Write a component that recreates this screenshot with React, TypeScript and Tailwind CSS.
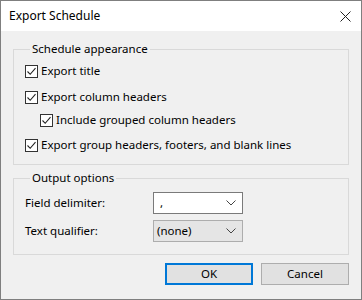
import React from 'react';

const font = { fontFamily: '"Noto Sans", "Liberation Sans", sans-serif' };

const CheckBox: React.FC<{ label: string; className?: string }> = ({ label, className }) => (
  <label className={`flex items-center h-4 ${className ?? ''}`}>
    <span className="w-[13px] h-[13px] border border-[#333] bg-white flex items-center justify-center">
      <svg width="11" height="11" viewBox="0 0 11 11">
        <path d="M1.5 5.5 L4.2 8.3 L9.5 2.2" fill="none" stroke="#222" strokeWidth="1.1" />
      </svg>
    </span>
    <span className="ml-[3px]">{label}</span>
  </label>
);

const Chevron: React.FC = () => (
  <svg width="10" height="6" viewBox="0 0 10 6" className="mr-[6px]">
    <path d="M0.5 0.5 L5 5 L9.5 0.5" fill="none" stroke="#444" strokeWidth="1" />
  </svg>
);

const Combo: React.FC<{ value: string; disabled?: boolean }> = ({ value, disabled }) => (
  <div
    className={`w-[90px] h-[22px] flex items-center justify-between border ${
      disabled ? 'bg-[#e5e5e5] border-[#adadad] pl-[3px]' : 'bg-white border-[#7a7a7a] pl-[6px]'
    }`}
  >
    <span>{value}</span>
    <Chevron />
  </div>
);

export default function App() {
  return (
    <div
      className="w-[362px] h-[300px] border border-[#7f7f7f] bg-[#f0f0f0] flex flex-col text-[11.5px] text-black leading-4"
      style={font}
    >
      {/* title bar */}
      <div className="h-[30px] bg-white flex items-center justify-between pl-[8px] pr-[10px] shrink-0">
        <span className="text-[12px]">Export Schedule</span>
        <svg width="11" height="11" viewBox="0 0 11 11">
          <path d="M0.5 0.5 L10.5 10.5 M10.5 0.5 L0.5 10.5" stroke="#222" strokeWidth="1" />
        </svg>
      </div>

      <div className="flex flex-col px-3">
        <fieldset className="mt-[10px] border border-[#d9d9d9] pl-[11px] pb-[11px]">
          <legend className="ml-[5px] px-[2px]">Schedule appearance</legend>
          <CheckBox label="Export title" className="mt-[6px]" />
          <CheckBox label="Export column headers" className="mt-[10px]" />
          <CheckBox label="Include grouped column headers" className="mt-[7px] ml-[15px]" />
          <CheckBox label="Export group headers, footers, and blank lines" className="mt-[9px]" />
        </fieldset>

        <fieldset className="mt-[5px] border border-[#d9d9d9] pl-[11px] pb-[12px]">
          <legend className="ml-[5px] px-[2px]">Output options</legend>
          <div className="mt-[6px] flex items-center">
            <span className="w-[128px]">Field delimiter:</span>
            <Combo value="," />
          </div>
          <div className="mt-[6px] flex items-center">
            <span className="w-[128px]">Text qualifier:</span>
            <Combo value="(none)" disabled />
          </div>
        </fieldset>

        <div className="mt-[8px] flex justify-end gap-2">
          <button className="w-[88px] h-[22px] border-2 border-[#0078d7] bg-[#e1e1e1]">OK</button>
          <button className="w-[88px] h-[22px] border border-[#adadad] bg-[#e1e1e1]">Cancel</button>
        </div>
      </div>
    </div>
  );
}
